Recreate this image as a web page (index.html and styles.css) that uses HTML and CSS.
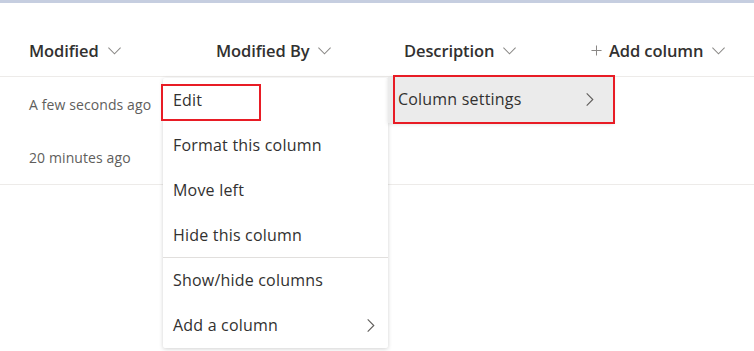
FILE: index.html
```html
<!DOCTYPE html>
<html lang="en">
<head>
    <meta charset="UTF-8">
    <meta name="viewport" content="width=device-width, initial-scale=1.0">
    <title>Documents</title>
    <link rel="stylesheet" href="styles.css">
</head>
<body>
    <div class="top-bar"></div>
    <div class="list">
        <div class="list-header">
            <div class="col">Modified <svg class="chev" viewBox="0 0 16 16"><path d="M1.5 5l6.5 6.5 6.5-6.5"/></svg></div>
            <div class="col">Modified By <svg class="chev" viewBox="0 0 16 16"><path d="M1.5 5l6.5 6.5 6.5-6.5"/></svg></div>
            <div class="col">Description <svg class="chev" viewBox="0 0 16 16"><path d="M1.5 5l6.5 6.5 6.5-6.5"/></svg></div>
            <div class="col add"><svg class="plus" viewBox="0 0 12 12"><path d="M6 0.5v11M0.5 6h11"/></svg> Add column <svg class="chev" viewBox="0 0 16 16"><path d="M1.5 5l6.5 6.5 6.5-6.5"/></svg></div>
        </div>
        <div class="rows">
            <div class="row">A few seconds ago</div>
            <div class="row">20 minutes ago</div>
        </div>
    </div>

    <!-- context menu for the Modified By column -->
    <div class="menu">
        <div class="item">Edit</div>
        <div class="item">Format this column</div>
        <div class="item">Move left</div>
        <div class="item">Hide this column</div>
        <div class="divider"></div>
        <div class="item">Show/hide columns</div>
        <div class="item">Add a column <svg class="arrow" viewBox="0 0 16 16"><path d="M5 1.5l6.5 6.5-6.5 6.5"/></svg></div>
    </div>

    <div class="submenu">
        <div class="item">Column settings <svg class="arrow" viewBox="0 0 16 16"><path d="M5 1.5l6.5 6.5-6.5 6.5"/></svg></div>
    </div>

    <!-- annotation boxes -->
    <div class="mark mark-edit"></div>
    <div class="mark mark-settings"></div>
</body>
</html>
```

FILE: styles.css
```css
body {
    margin: 0;
    font-family: "Open Sans", "Noto Sans", Arial, sans-serif;
    color: #323130;
    background: #fff;
    width: 754px;
    height: 351px;
    overflow: hidden;
    position: relative;
}
.top-bar { height: 3px; background: #c6cee0; }

.list-header {
    display: grid;
    grid-template-columns: 187px 188px 187px 1fr;
    padding-left: 29px;
    height: 74px;
    box-sizing: border-box;
    padding-bottom: 14px;
    align-items: end;
    border-bottom: 1px solid #edebe9;
    font-size: 16.5px;
    font-weight: 600;
}
.col { display: flex; align-items: center; white-space: nowrap; letter-spacing: -0.1px; }
.chev {
    width: 15px;
    height: 15px;
    margin-left: 8px;
    fill: none;
    stroke: #8a8886;
    stroke-width: 1.1;
}
.add .plus {
    width: 11px;
    height: 11px;
    margin-right: 7px;
    fill: none;
    stroke: #8a8886;
    stroke-width: 1.1;
}

.rows { border-bottom: 1px solid #edebe9; }
.row {
    height: 54px;
    display: flex;
    align-items: center;
    padding-left: 29px;
    font-size: 14px;
    color: #605e5c;
    letter-spacing: 0.1px;
}
.row + .row { height: 53px; }

.menu {
    position: absolute;
    left: 163px;
    top: 78px;
    width: 225px;
    background: #fff;
    box-shadow: 0 1px 4px rgba(0, 0, 0, 0.18);
    border-radius: 2px;
}
.item {
    height: 45px;
    display: flex;
    align-items: center;
    padding: 0 10px;
    font-size: 16px;
    letter-spacing: 0.2px;
    white-space: nowrap;
    padding-bottom: 1px;
    box-sizing: border-box;
}
.divider { height: 1px; background: #e1dfdd; margin-top: -1px; }
.arrow {
    width: 15px;
    height: 15px;
    margin-left: auto;
    fill: none;
    stroke: #605e5c;
    stroke-width: 1.2;
}

.submenu {
    position: absolute;
    left: 388px;
    top: 77px;
    width: 225px;
    background: #ebebeb;
    box-shadow: 0 1px 4px rgba(0, 0, 0, 0.14);
}
.submenu .item { padding: 0 16px 2px 10px; height: 46px; }

.mark { position: absolute; border: 2px solid #e81c25; box-sizing: border-box; }
.mark-edit { left: 161px; top: 84px; width: 100px; height: 37px; }
.mark-settings { left: 393px; top: 75px; width: 222px; height: 49px; }
```
